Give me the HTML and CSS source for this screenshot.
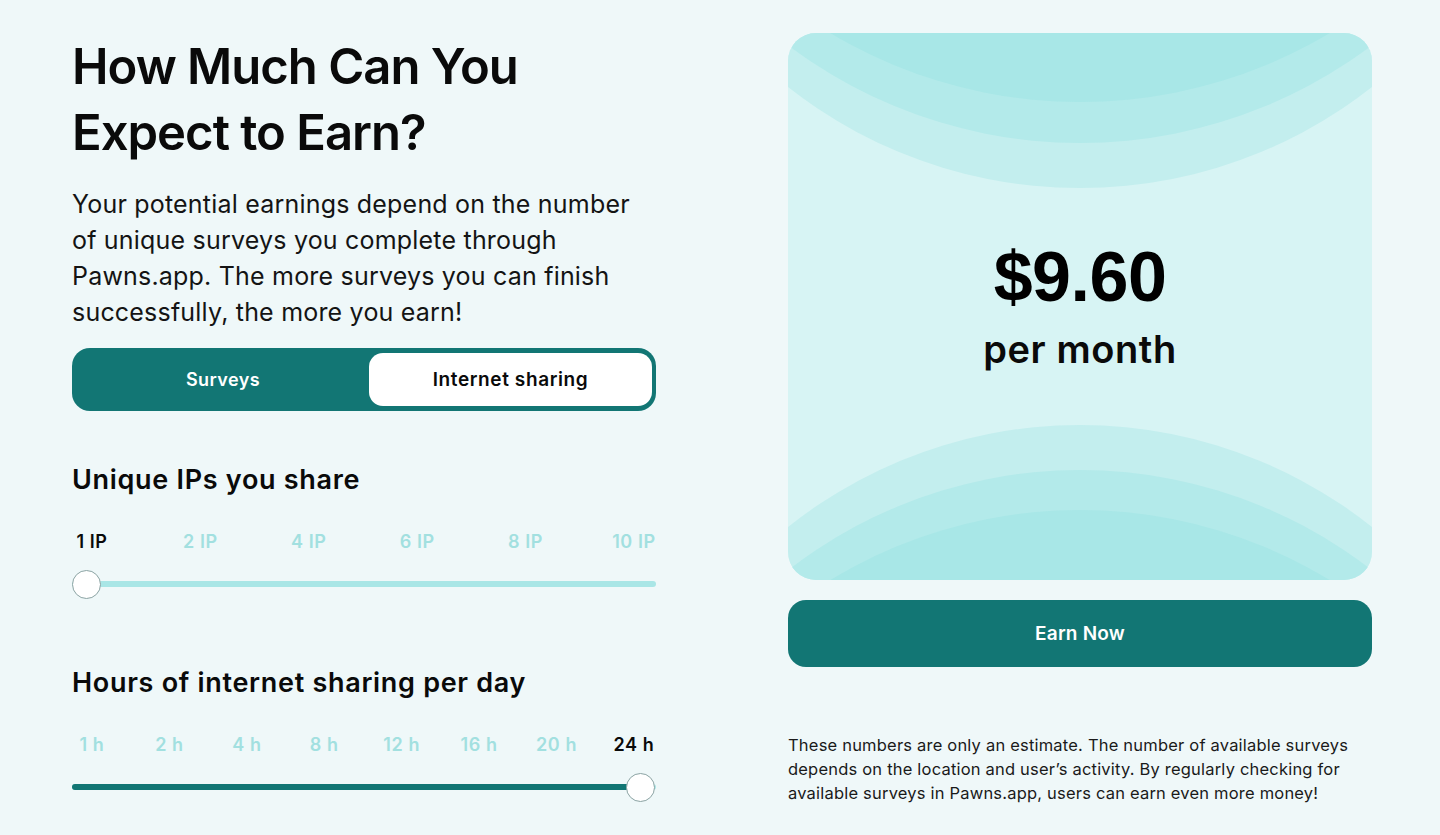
FILE: index.html
```html
<!DOCTYPE html>
<html lang="en">
<head>
<meta charset="utf-8">
<title>How Much Can You Expect to Earn?</title>
<link rel="stylesheet" href="styles.css">
</head>
<body>
<main class="page">
  <section class="left">
    <h1 class="title">How Much Can You<br>Expect to Earn?</h1>
    <p class="lead">Your potential earnings depend on the number of unique surveys you complete through Pawns.app. The more surveys you can finish successfully, the more you earn!</p>
    <div class="toggle">
      <button class="tab">Surveys</button>
      <button class="tab tab-active">Internet sharing</button>
    </div>

    <h2 class="label-title ips-title">Unique IPs you share</h2>
    <div class="ticks">
      <span class="tick tick-on">1 IP</span>
      <span class="tick">2 IP</span>
      <span class="tick">4 IP</span>
      <span class="tick">6 IP</span>
      <span class="tick">8 IP</span>
      <span class="tick">10 IP</span>
    </div>
    <div class="slider">
      <div class="track"><div class="fill" style="width:0%"></div></div>
      <div class="thumb" style="left:0px"></div>
    </div>

    <h2 class="label-title hours-title">Hours of internet sharing per day</h2>
    <div class="ticks">
      <span class="tick">1 h</span>
      <span class="tick">2 h</span>
      <span class="tick">4 h</span>
      <span class="tick">8 h</span>
      <span class="tick">12 h</span>
      <span class="tick">16 h</span>
      <span class="tick">20 h</span>
      <span class="tick tick-on">24 h</span>
    </div>
    <div class="slider">
      <div class="track"><div class="fill" style="width:97%"></div></div>
      <div class="thumb" style="left:554px"></div>
    </div>
  </section>

  <section class="right">
    <div class="card">
      <svg class="waves" width="584" height="547" viewBox="0 0 584 547" aria-hidden="true">
        <circle cx="292" cy="-318" r="473" fill="#c3eeee"/>
        <circle cx="292" cy="-375" r="485" fill="#b3eaea"/>
        <circle cx="292" cy="-418" r="487" fill="#a8e7e7"/>
        <circle cx="292" cy="861" r="469" fill="#c3eeee"/>
        <circle cx="292" cy="912" r="475" fill="#b3eaea"/>
        <circle cx="292" cy="957" r="480" fill="#a8e7e7"/>
      </svg>
      <div class="amount">$9.60</div>
      <div class="period">per month</div>
    </div>
    <button class="cta">Earn Now</button>
    <p class="note">These numbers are only an estimate. The number of available surveys depends on the location and user’s activity. By regularly checking for available surveys in Pawns.app, users can earn even more money!</p>
  </section>
</main>
</body>
</html>
```

FILE: styles.css
```css
* { box-sizing: border-box; }

html, body {
  margin: 0;
  padding: 0;
}

body {
  background: #eff8f9;
  color: #0b0b0b;
  font-family: "Inter", "Noto Sans", sans-serif;
  width: 1440px;
  height: 835px;
  overflow: hidden;
}

.page {
  display: grid;
  grid-template-columns: 584px 584px;
  column-gap: 132px;
  padding: 33px 0 0 72px;
}

.left {
  display: flex;
  flex-direction: column;
}

.title {
  margin: 1px 0 0;
  font-size: 49px;
  line-height: 66px;
  font-weight: 600;
  letter-spacing: -1px;
  color: #0a0a0a;
}

.lead {
  margin: 20px 0 0;
  font-size: 25px;
  line-height: 36px;
  font-weight: 400;
  letter-spacing: 0.2px;
  color: #141414;
}

.toggle {
  margin-top: 18px;
  height: 63px;
  width: 584px;
  background: #127674;
  border-radius: 18px;
  padding: 5px 4px 5px 5px;
  display: grid;
  grid-template-columns: 292px 1fr;
}

.tab {
  border: 0;
  background: transparent;
  border-radius: 14px;
  font-family: inherit;
  font-size: 18px;
  font-weight: 600;
  letter-spacing: 0.4px;
  color: #ffffff;
  padding: 0;
  cursor: pointer;
}

.tab-active {
  background: #ffffff;
  color: #0a0a0a;
  font-size: 19px;
  letter-spacing: 0.6px;
}

.label-title {
  margin: 0;
  font-size: 27px;
  line-height: 34px;
  font-weight: 600;
  letter-spacing: 0.7px;
  color: #0a0a0a;
}

.ips-title { margin-top: 52px; }
.hours-title { margin-top: 68px; }

.ticks {
  margin: 34px 0 0 20px;
  width: 542px;
  height: 22px;
  display: flex;
  justify-content: space-between;
}

.tick {
  width: 0;
  display: flex;
  justify-content: center;
  white-space: nowrap;
  font-size: 18px;
  line-height: 22px;
  font-weight: 600;
  letter-spacing: 0.6px;
  color: #a2e0e0;
}

.tick-on { color: #0a0a0a; }

.slider {
  position: relative;
  margin-top: 17px;
  width: 584px;
  height: 28px;
  display: flex;
  align-items: center;
}

.track {
  width: 100%;
  height: 6px;
  border-radius: 3px;
  background: #a9e6e6;
  overflow: hidden;
}

.fill {
  height: 100%;
  background: #127674;
}

.thumb {
  position: absolute;
  top: 0;
  width: 29px;
  height: 29px;
  border-radius: 50%;
  background: #ffffff;
  border: 1.5px solid #8aa3a3;
}

.right {
  display: flex;
  flex-direction: column;
}

.card {
  position: relative;
  height: 547px;
  border-radius: 28px;
  background: #d7f4f4;
  overflow: hidden;
  display: flex;
  flex-direction: column;
  align-items: center;
  justify-content: center;
}

.waves {
  position: absolute;
  inset: 0;
}

.amount {
  position: relative;
  margin-top: -4px;
  font-family: "Liberation Sans", Arial, sans-serif;
  font-weight: 700;
  font-size: 70px;
  line-height: 80px;
  color: #000;
  letter-spacing: -0.5px;
}

.period {
  position: relative;
  margin-top: 8px;
  font-size: 38px;
  line-height: 48px;
  font-weight: 600;
  color: #0a0a0a;
  letter-spacing: 0.6px;
}

.cta {
  margin-top: 20px;
  height: 67px;
  width: 100%;
  border: 0;
  border-radius: 18px;
  background: #127674;
  color: #ffffff;
  font-family: inherit;
  font-size: 19px;
  font-weight: 600;
  letter-spacing: 0.2px;
  cursor: pointer;
}

.note {
  margin: 66px 0 0;
  font-size: 16.5px;
  line-height: 24px;
  color: #1a1a1a;
  letter-spacing: 0.2px;
}
```
